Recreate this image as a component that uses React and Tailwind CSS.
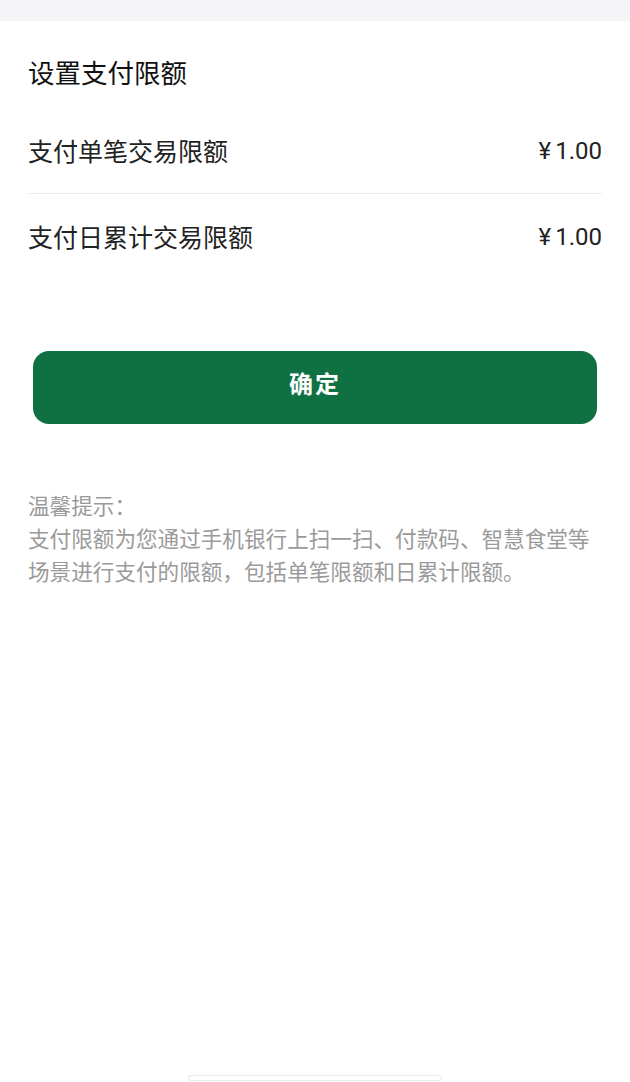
import React from "react";

const font = { fontFamily: '"Noto Sans CJK SC", "Noto Sans", sans-serif' };
const numFont = { fontFamily: 'Roboto, "Noto Sans CJK SC", sans-serif' };

const LimitRow = ({ label, value, border }) => (
  <div className={`flex items-center justify-between h-[86px] ${border ? "border-b border-[#ededed]" : ""}`}>
    <span className="text-[25px] text-[#222]">{label}</span>
    <span className="text-[24px] text-[#222]" style={numFont}>
      ¥<span className="ml-[4px]">{value}</span>
    </span>
  </div>
);

const App = () => {
  return (
    <div className="relative w-[630px] h-[1082px] bg-white overflow-hidden" style={font}>
      <div className="h-[21px] bg-[#f5f5f7]" />
      <div className="px-[28px]">
        <h1 className="pt-[31px] text-[26.5px] leading-[40px] text-[#111]">设置支付限额</h1>
        <div className="mt-[16px]">
          <LimitRow label="支付单笔交易限额" value="1.00" border />
          <LimitRow label="支付日累计交易限额" value="1.00" />
        </div>
      </div>
      <div className="px-[33px] mt-[71px]">
        <button className="w-full h-[73px] pb-[10px] rounded-[16px] bg-[#0f7142] text-white text-[24px] font-bold tracking-[2px]">
          确定
        </button>
      </div>
      <div className="px-[28px] mt-[64px] text-[21.6px] leading-[33px] text-[#9a9a9a] whitespace-nowrap">
        <p>温馨提示：</p>
        <p>
          支付限额为您通过手机银行上扫一扫、付款码、智慧食堂等
          <br />
          场景进行支付的限额，包括单笔限额和日累计限额。
        </p>
      </div>
      <div className="absolute bottom-[1px] left-[188px] w-[254px] h-[6px] rounded-full border border-[#e8e8e8] bg-white" />
    </div>
  );
};

export default App;
